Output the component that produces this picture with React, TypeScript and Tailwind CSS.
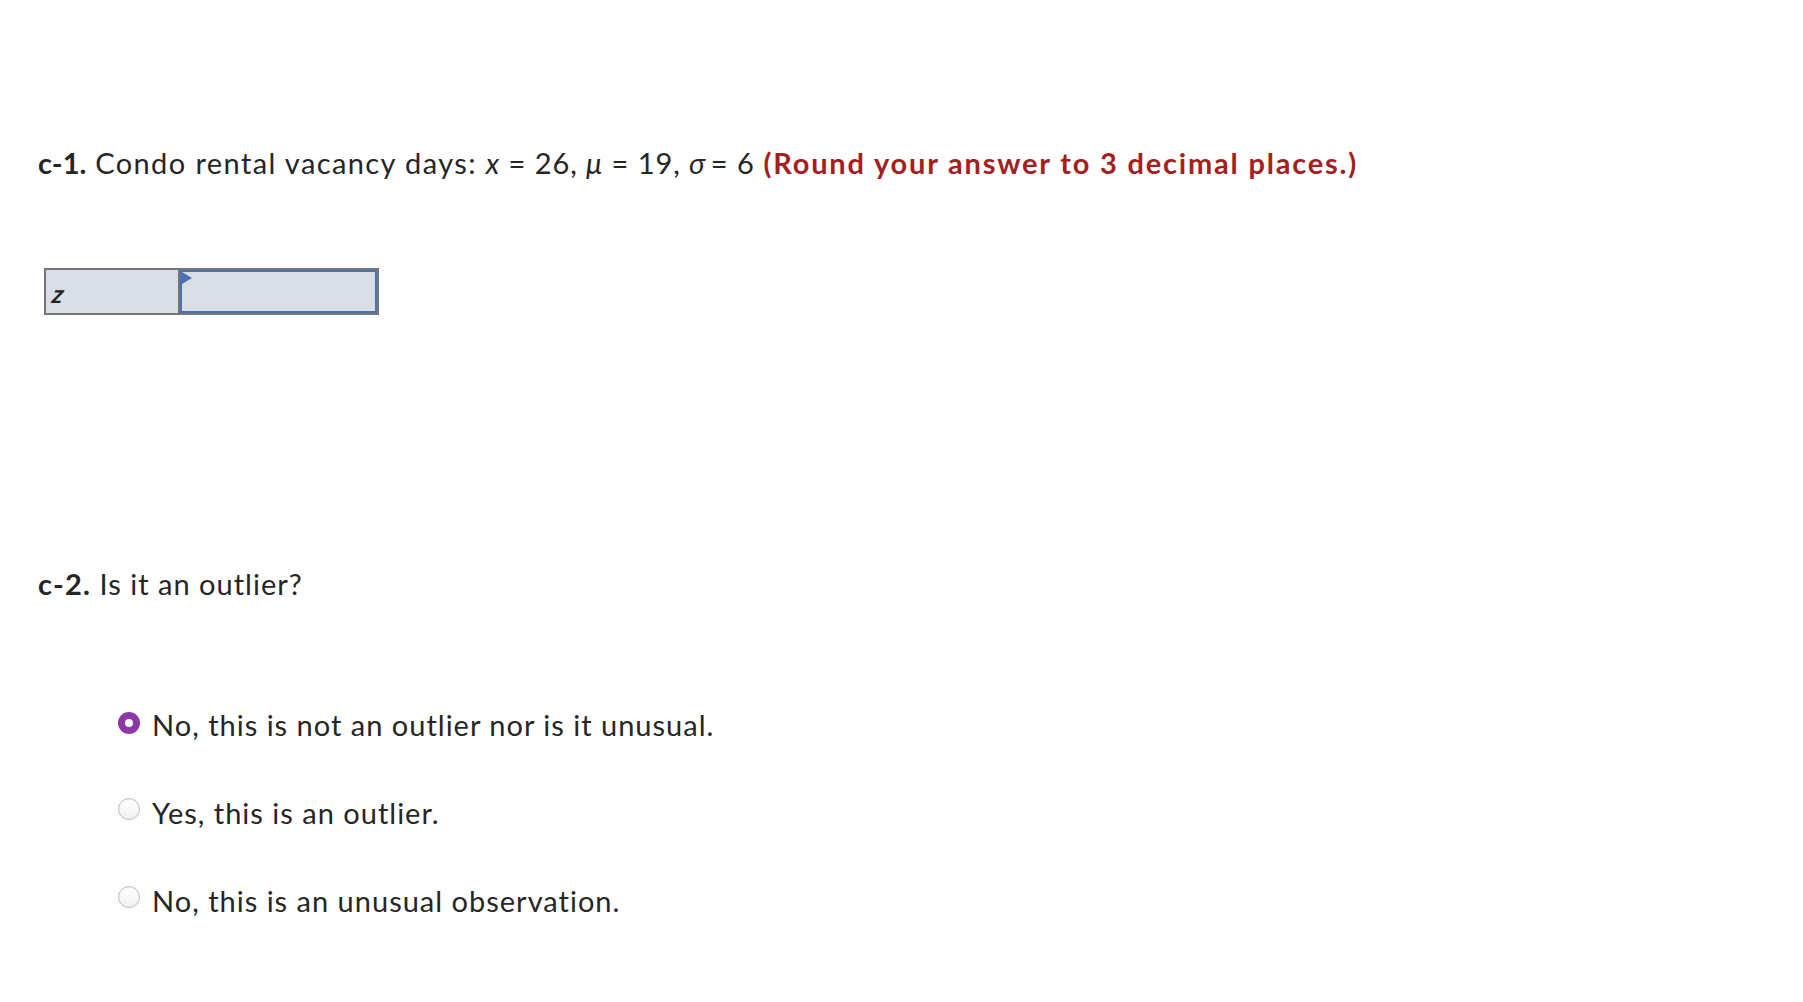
import { useState } from "react"

const options = [
    "No, this is not an outlier nor is it unusual.",
    "Yes, this is an outlier.",
    "No, this is an unusual observation.",
]

const Radio = ({ checked }: { checked: boolean }) =>
    checked ? (
        <span className="mt-[5px] flex size-[22px] shrink-0 items-center justify-center rounded-full bg-[#8b38a8]">
            <span className="size-[8px] rounded-full bg-white" />
        </span>
    ) : (
        <span className="mt-[3px] size-[22px] shrink-0 rounded-full border border-[#bdbdbd] bg-gradient-to-b from-white to-[#f0f0f0] shadow-[inset_0_1px_1px_rgba(0,0,0,0.06)]" />
    )

export default function App() {
    const [selected, setSelected] = useState(0)

    return (
        <div className="min-h-screen bg-white pl-[38px] pt-[145px] text-[29px] leading-[36px] tracking-[1px] text-[#262626] font-['Lato',sans-serif]">
            <p className="tracking-[1.4px]">
                <b className="tracking-[0px]">c-1.</b> Condo rental vacancy days:{" "}
                <span className="tracking-[0.95px]">
                    <i>x</i> = 26, <i>μ</i> = 19, <i>σ</i>&thinsp;= 6
                </span>{" "}
                <b className="tracking-[1.8px] text-[#a4201d]">(Round your answer to 3 decimal places.)</b>
            </p>

            <div className="ml-[6px] mt-[87px] inline-flex h-[47px] border-2 border-[#757575] bg-[#d9dde6]">
                <div className="flex w-[134px] items-end border-r-2 border-[#757575] pb-[7px] pl-[7px]">
                    <span className="-skew-x-12 text-[25px] leading-none font-bold italic text-[#222]">z</span>
                </div>
                <div className="relative w-[197px] border-2 border-[#4a72b2]">
                    <span className="absolute left-0 top-0 h-0 w-0 border-y-[6px] border-l-[10px] border-y-transparent border-l-[#4a72b2]" />
                </div>
            </div>

            <p className="mt-[251px]">
                <b className="tracking-[1.2px]">c-2.</b> Is it an outlier?
            </p>

            <div className="ml-[80px] mt-[105px] flex flex-col gap-[52px]">
                {options.map((label, i) => (
                    <label key={label} className="flex cursor-pointer items-start gap-[12px]" onClick={() => setSelected(i)}>
                        <Radio checked={selected === i} />
                        <span>{label}</span>
                    </label>
                ))}
            </div>
        </div>
    )
}
